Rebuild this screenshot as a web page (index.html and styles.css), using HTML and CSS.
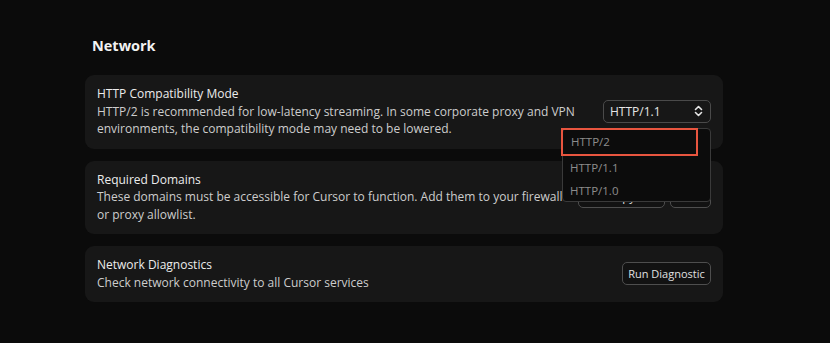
FILE: index.html
```html
<!DOCTYPE html>
<html lang="en">

<head>
    <meta charset="UTF-8">
    <meta name="viewport" content="width=device-width, initial-scale=1.0">
    <title>Network</title>
    <link rel="stylesheet" href="styles.css">
</head>

<body>
    <div class="section">
        <h2 class="section-title">Network</h2>

        <div class="setting">
            <div class="setting-text">
                <div class="setting-name">HTTP Compatibility Mode</div>
                <div class="setting-desc">HTTP/2 is recommended for low-latency streaming. In some corporate proxy and VPN environments, the compatibility mode may need to be lowered.</div>
            </div>
            <div class="select-wrap">
                <div class="select">
                    <span>HTTP/1.1</span>
                    <svg class="chevrons" width="9" height="12" viewBox="0 0 9 12">
                        <path d="M1.5 4.5 L4.5 1.5 L7.5 4.5 M1.5 7.5 L4.5 10.5 L7.5 7.5" fill="none" stroke="#e6e6e6" stroke-width="1.6" stroke-linecap="round" stroke-linejoin="round"/>
                    </svg>
                </div>
                <ul class="dropdown">
                    <li class="dropdown-item highlighted">HTTP/2</li>
                    <li class="dropdown-item">HTTP/1.1</li>
                    <li class="dropdown-item">HTTP/1.0</li>
                </ul>
            </div>
        </div>

        <div class="setting">
            <div class="setting-text">
                <div class="setting-name">Required Domains</div>
                <div class="setting-desc">These domains must be accessible for Cursor to function. Add them to your firewall or proxy allowlist.</div>
            </div>
            <div class="buttons">
                <button class="btn btn-wide">Copy</button>
                <button class="btn btn-small">View</button>
            </div>
        </div>

        <div class="setting">
            <div class="setting-text">
                <div class="setting-name">Network Diagnostics</div>
                <div class="setting-desc">Check network connectivity to all Cursor services</div>
            </div>
            <button class="btn btn-run">Run Diagnostic</button>
        </div>
    </div>
</body>

</html>
```

FILE: styles.css
```css
body {
    margin: 0;
    background: #0b0b0b;
    font-family: "Open Sans", "Noto Sans", Arial, sans-serif;
    font-size: 12px;
    color: #d6d6d6;
}

.section {
    width: 638px;
    padding: 33px 0 0 85px;
}

.section-title {
    margin: 0 0 16px 7px;
    font-size: 14.5px;
    font-weight: 700;
    color: #f2f2f2;
    line-height: 26px;
}

.setting {
    display: flex;
    align-items: center;
    gap: 4px;
    background: #171717;
    border-radius: 9px;
    padding: 10px 12px 11px 12px;
    margin-bottom: 12px;
    line-height: 17.5px;
}

.setting-text {
    flex: 1;
    min-width: 0;
}

.setting-name {
    color: #ececec;
}

.setting-desc {
    color: #cdcdcd;
}

.select-wrap {
    position: relative;
}

.select {
    display: flex;
    align-items: center;
    justify-content: space-between;
    box-sizing: border-box;
    width: 108px;
    height: 23px;
    padding: 0 7px 0 6px;
    border: 1px solid #4a4a4a;
    border-radius: 5px;
    color: #e6e6e6;
}

.dropdown {
    position: absolute;
    top: 28px;
    left: -41px;
    box-sizing: border-box;
    width: 149px;
    height: 74px;
    margin: 0;
    padding: 1px 0;
    list-style: none;
    background: #0c0c0c;
    border: 1px solid #3a3a3a;
    border-radius: 4px;
    z-index: 2;
    font-size: 11.5px;
}

.dropdown-item {
    height: 23px;
    line-height: 23px;
    padding-left: 7px;
    color: #8c8c8c;
}

.dropdown-item.highlighted {
    margin: -2px 12px 0 -2px;
    height: 24px;
    line-height: 24px;
    padding-left: 8px;
    border: 2px solid #e8553f;
}

.buttons {
    display: flex;
    gap: 5px;
}

.btn {
    height: 23px;
    padding: 0 6px;
    background: #121212;
    border: 1px solid #4e4e4e;
    border-radius: 5px;
    font-family: inherit;
    font-size: 11.5px;
    color: #e0e0e0;
}

.btn-wide {
    width: 87px;
}

.btn-small {
    width: 41px;
}

.btn-run {
    width: 89px;
    padding: 0 4px;
    font-size: 11px;
}
```
